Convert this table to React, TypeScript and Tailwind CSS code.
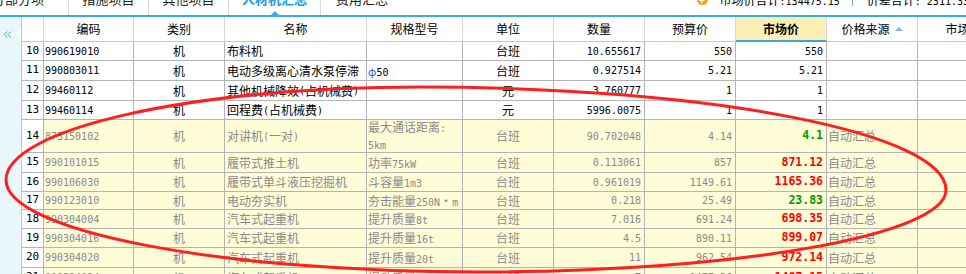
import { ChevronsLeft } from "lucide-react";

type Row = {
  n: number;
  code: string;
  name: string;
  spec: string[];
  unit: string;
  qty: string;
  budget: string;
  market: string;
  tone?: "red" | "green";
  auto: boolean;
  h: string;
};

const rows: Row[] = [
  { n: 10, code: "990619010", name: "布料机", spec: [], unit: "台班", qty: "10.655617", budget: "550", market: "550", auto: false, h: "h-[19px]" },
  { n: 11, code: "990803011", name: "电动多级离心清水泵停滞", spec: ["φ50"], unit: "台班", qty: "0.927514", budget: "5.21", market: "5.21", auto: false, h: "h-[20px]" },
  { n: 12, code: "99460112", name: "其他机械降效(占机械费)", spec: [], unit: "元", qty: "3.760777", budget: "1", market: "1", auto: false, h: "h-[20px]" },
  { n: 13, code: "99460114", name: "回程费(占机械费)", spec: [], unit: "元", qty: "5996.0075", budget: "1", market: "1", auto: false, h: "h-[19px]" },
  { n: 14, code: "873150102", name: "对讲机(一对)", spec: ["最大通话距离:", "5km"], unit: "台班", qty: "90.702048", budget: "4.14", market: "4.1", tone: "green", auto: true, h: "h-[33px]" },
  { n: 15, code: "990101015", name: "履带式推土机", spec: ["功率75kW"], unit: "台班", qty: "0.113061", budget: "857", market: "871.12", tone: "red", auto: true, h: "h-[20px]" },
  { n: 16, code: "990106030", name: "履带式单斗液压挖掘机", spec: ["斗容量1m3"], unit: "台班", qty: "0.961019", budget: "1149.61", market: "1165.36", tone: "red", auto: true, h: "h-[19px]" },
  { n: 17, code: "990123010", name: "电动夯实机", spec: ["夯击能量250N・m"], unit: "台班", qty: "0.218", budget: "25.49", market: "23.83", tone: "green", auto: true, h: "h-[18px]" },
  { n: 18, code: "990304004", name: "汽车式起重机", spec: ["提升质量8t"], unit: "台班", qty: "7.016", budget: "691.24", market: "698.35", tone: "red", auto: true, h: "h-[19px]" },
  { n: 19, code: "990304016", name: "汽车式起重机", spec: ["提升质量16t"], unit: "台班", qty: "4.5", budget: "890.11", market: "899.07", tone: "red", auto: true, h: "h-[19px]" },
  { n: 20, code: "990304020", name: "汽车式起重机", spec: ["提升质量20t"], unit: "台班", qty: "11", budget: "962.54", market: "972.14", tone: "red", auto: true, h: "h-[20px]" },
  { n: 21, code: "990304024", name: "汽车式起重机", spec: ["提升质量25t"], unit: "台班", qty: "7", budget: "1477.36", market: "1487.15", tone: "red", auto: true, h: "h-[20px]" },
];

// ascii runs get the narrow mono face, the rest stays in the CJK face
function Mixed({ text }: { text: string }) {
  const parts = text.split(/([\x20-\x7e]+)/);
  return (
    <>
      {parts.map((p, i) => {
        if (!p) return null;
        if (/^[\x20-\x7e]+$/.test(p))
          return (
            <span key={i} className="font-['DejaVu_Sans_Mono',monospace] text-[10px]">
              {p}
            </span>
          );
        if (p === "φ")
          return (
            <span key={i} className="text-[#1d5fd1] text-[11px]">
              {p}
            </span>
          );
        return <span key={i}>{p}</span>;
      })}
    </>
  );
}

const cell = "shrink-0 flex items-center overflow-hidden whitespace-nowrap border-r border-b border-[#b4b4b4]";
const head = "shrink-0 flex items-center justify-center overflow-hidden whitespace-nowrap border-r border-b border-r-[#d8d8d8] border-b-[#c8c8c8] bg-white";

function TopBar() {
  return (
    <div className="flex h-[15px] overflow-hidden bg-white text-[13px] text-[#222]">
      <div className="flex h-full -ml-[32px]">
        <div className="w-[101px] flex justify-center border-r border-[#d9d9d9]">
          <span className="-mt-[8px] leading-[14px]">分部分项</span>
        </div>
        <div className="w-[80px] flex justify-center border-r border-[#d9d9d9]">
          <span className="-mt-[8px] leading-[14px]">措施项目</span>
        </div>
        <div className="w-[80px] flex justify-center border-r border-[#d9d9d9]">
          <span className="-mt-[8px] leading-[14px]">其他项目</span>
        </div>
        <div className="relative w-[92px] flex justify-center border-r border-[#d9d9d9]">
          <span className="-mt-[8px] leading-[14px] font-bold text-[#1a9be0]">人材机汇总</span>
          <div className="absolute bottom-0 left-[42px] w-0 h-0 border-x-[4px] border-x-transparent border-b-[4px] border-b-[#3aaee2]" />
        </div>
        <div className="w-[82px] flex justify-center">
          <span className="-mt-[8px] leading-[14px]">费用汇总</span>
        </div>
      </div>
      <div className="ml-auto flex items-start text-[12px] text-black">
        <div className="-mt-[6px] w-[11px] h-[11px] rounded-full bg-[#f3a21c] flex items-center justify-center text-white text-[10px] font-bold leading-none">
          +
        </div>
        <span className="ml-[12px] -mt-[7px] leading-[14px]">
          <Mixed text="市场价合计:134475.15" />
        </span>
        <div className="ml-[12px] w-px h-[6px] bg-[#7da7c9]" />
        <span className="ml-[14px] -mt-[7px] leading-[14px] mr-[-3px]">
          <Mixed text="价差合计: 2311.33" />
        </span>
      </div>
    </div>
  );
}

function Sidebar() {
  return (
    <div className="relative shrink-0 w-[22px] bg-[#e9f7fd] border-r border-[#c3c3c3] flex flex-col items-start pt-[11px] pl-[1px]">
      <ChevronsLeft size={13} strokeWidth={1.6} className="text-[#1f93d4]" />
      <div className="absolute top-[12px] right-0 w-0 h-0 border-y-[5px] border-y-transparent border-r-[5px] border-r-white" />
    </div>
  );
}

function Header() {
  return (
    <div className="flex h-[25px] text-[12px] text-black">
      <div className={`${head} w-[22px]`} />
      <div className={`${head} w-[90px]`}>编码</div>
      <div className={`${head} w-[91px]`}>类别</div>
      <div className={`${head} w-[142px]`}>名称</div>
      <div className={`${head} w-[96px]`}>规格型号</div>
      <div className={`${head} w-[91px]`}>单位</div>
      <div className={`${head} w-[91px]`}>数量</div>
      <div className={`${head} w-[91px]`}>预算价</div>
      <div className="shrink-0 w-[91px] flex items-center justify-center bg-[#fdeeb5] border-r border-r-[#d8d8d8] border-b-2 border-b-[#3aa7dc] font-bold">
        市场价
      </div>
      <div className={`${head} w-[91px] gap-[5px]`}>
        价格来源
        <span className="w-0 h-0 border-x-[4px] border-x-transparent border-b-[4px] border-b-[#7fb7dd]" />
      </div>
      <div className={`${head} w-[80px]`}>市场</div>
    </div>
  );
}

function BodyRow({ r }: { r: Row }) {
  const tone = r.auto ? "bg-[#fffcd8] text-[#8a8a8a]" : "bg-white text-black";
  const mk =
    r.tone === "red"
      ? "text-[#ff0000] font-bold"
      : r.tone === "green"
        ? "text-[#009a00] font-bold"
        : "";
  return (
    <div className={`flex ${r.h} text-[12px]`}>
      <div className={`${cell} w-[22px] justify-center bg-white text-black font-['DejaVu_Sans_Mono',monospace] text-[11px]`}>
        {r.n}
      </div>
      <div className={`${cell} ${tone} w-[90px] pl-[1px] font-['DejaVu_Sans_Mono',monospace] text-[10px]`}>{r.code}</div>
      <div className={`${cell} ${tone} w-[91px] justify-center`}>机</div>
      <div className={`${cell} ${tone} w-[142px] pl-[2px]`}>
        <Mixed text={r.name} />
      </div>
      <div className={`${cell} ${tone} w-[96px] pl-[1px] ${r.spec.length > 1 ? "flex-col !items-start justify-center leading-[15px]" : ""}`}>
        {r.spec.map((s, i) => (
          <div key={i}>
            <Mixed text={s} />
          </div>
        ))}
      </div>
      <div className={`${cell} ${tone} w-[91px] justify-center`}>{r.unit}</div>
      <div className={`${cell} ${tone} w-[91px] justify-end pr-[3px] font-['DejaVu_Sans_Mono',monospace] text-[10px]`}>{r.qty}</div>
      <div className={`${cell} ${tone} w-[91px] justify-end pr-[3px] font-['DejaVu_Sans_Mono',monospace] text-[10px]`}>{r.budget}</div>
      <div className={`${cell} ${tone} w-[91px] justify-end pr-[3px] font-['DejaVu_Sans_Mono',monospace] ${r.tone ? "text-[11.5px]" : "text-[10px]"} ${mk}`}>
        {r.market}
      </div>
      <div className={`${cell} ${tone} w-[91px] pl-[1px]`}>{r.auto ? "自动汇总" : ""}</div>
      <div className={`${cell} ${tone} w-[80px]`} />
    </div>
  );
}

export default function App() {
  return (
    <div className="relative w-[966px] h-[274px] overflow-hidden bg-white font-['Noto_Sans_CJK_SC',sans-serif]">
      <TopBar />
      <div className="h-[2px] bg-[#37aee2]" />
      <div className="flex h-[257px]">
        <Sidebar />
        <div className="flex-1 overflow-hidden">
          <Header />
          {rows.map((r) => (
            <BodyRow key={r.n} r={r} />
          ))}
        </div>
      </div>
      {/* hand drawn red ring over the table */}
      <svg className="absolute inset-0 pointer-events-none" width="966" height="274" viewBox="0 0 966 274">
        <path
          d="M6 180 C6 129 191 87 420 87 C710 87 946 133 946 190 C946 235 737 272 480 272 C218 272 6 231 6 180 Z"
          fill="none"
          stroke="#ff1f1f"
          strokeWidth="3"
        />
      </svg>
    </div>
  );
}
